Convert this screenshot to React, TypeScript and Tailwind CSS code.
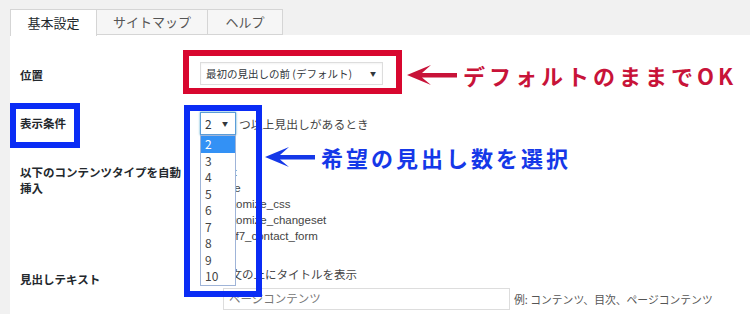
import React from "react";

const font = { fontFamily: '"Noto Sans CJK JP", "Noto Sans", sans-serif' };

function Arrow({ color }: { color: string }) {
  return (
    <svg width="50" height="22" viewBox="0 0 50 22">
      <path d="M0 11 L24 1 L15 9 L50 9 L50 13.5 L15 13.5 L24 21 Z" fill={color} />
    </svg>
  );
}

const postTypes = ["post", "page", "customize_css", "customize_changeset", "wpcf7_contact_form"];
const counts = ["2", "3", "4", "5", "6", "7", "8", "9", "10"];

export default function App() {
  return (
    <div
      className="relative w-[750px] h-[314px] overflow-hidden bg-[#f1f1f1] flex flex-col text-[#444]"
      style={font}
    >
      {/* tabs */}
      <div className="flex items-end h-[35px] pl-[10px] text-[13px]">
        <div className="h-[27px] w-[87px] -mb-px bg-white border border-b-0 border-[#d5d5d5] flex items-center justify-center text-[#23282d] relative z-10">
          基本設定
        </div>
        <div className="h-[26px] w-[111px] bg-[#f6f6f6] border border-l-0 border-[#d5d5d5] flex items-center justify-center text-[#555]">
          サイトマップ
        </div>
        <div className="h-[26px] w-[75px] bg-[#f6f6f6] border border-l-0 border-[#d5d5d5] flex items-center justify-center text-[#555]">
          ヘルプ
        </div>
      </div>

      {/* panel */}
      <div className="flex-1 ml-[10px] bg-white pl-[10px] text-[11.5px]">
        {/* 位置 */}
        <div className="flex items-center pt-[27px]">
          <div className="w-[180px] pt-[4px] font-bold text-[#23282d]">位置</div>
          <div className="w-[183px] h-[23px] border border-[#ddd] flex items-center justify-between pl-[5px] pr-[6px] text-[10.5px] text-[#32373c] shadow-[inset_0_1px_2px_rgba(0,0,0,0.05)]">
            <span>最初の見出しの前 (デフォルト)</span>
            <span className="text-[6px]">▼</span>
          </div>
        </div>

        {/* 表示条件 */}
        <div className="flex items-center mt-[27px]">
          <div className="w-[180px] font-bold text-[#23282d]">表示条件</div>
          <div className="relative">
            <div className="w-[36px] h-[23px] border border-[#5b9dd9] shadow-[0_0_2px_rgba(30,140,190,0.8)] flex items-center justify-between pl-[4px] pr-[7px] text-[12px] text-[#32373c]">
              <span>2</span>
              <span className="text-[6px]">▼</span>
            </div>
            <div className="absolute left-0 top-full w-[36px] bg-white border border-[#9fb4d8] z-20 text-[12px] text-[#444]">
              {counts.map((c, i) => (
                <div
                  key={c}
                  className={
                    i === 0
                      ? "h-[16.5px] leading-[16.5px] pl-[4px] bg-[#3391f5] text-white"
                      : "h-[16.5px] leading-[16.5px] pl-[4px]"
                  }
                >
                  {c}
                </div>
              ))}
            </div>
          </div>
          <span className="ml-[3px] text-[11.8px]">つ以上見出しがあるとき</span>
        </div>

        {/* 投稿タイプ */}
        <div className="flex mt-[29px]">
          <div className="w-[180px] pr-[10px] font-bold text-[#23282d] leading-[16px]">
            以下のコンテンツタイプを自動挿入
          </div>
          <div
            className="flex flex-col text-[11.5px] leading-[16px]"
            style={{ fontFamily: '"Liberation Sans", "Noto Sans CJK JP", sans-serif' }}
          >
            {postTypes.map((p) => (
              <div key={p} className="flex items-center gap-[3px] h-[16px]">
                <span className="w-[12px] h-[12px] border border-[#b4b9be] bg-white" />
                <span>{p}</span>
              </div>
            ))}
          </div>
        </div>

        {/* 見出しテキスト */}
        <div className="flex mt-[23px]">
          <div className="w-[180px] pt-[4px] font-bold text-[#23282d] leading-[16px]">見出しテキスト</div>
          <div className="flex flex-col">
            <div className="flex items-center gap-[7px] h-[16px] text-[11.5px]">
              <span className="w-[12px] h-[12px] border border-[#b4b9be] bg-white" />
              <span>本文の上にタイトルを表示</span>
            </div>
            <div className="flex items-center mt-[5px] ml-[23px]">
              <div className="w-[287px] h-[22px] border border-[#ddd] flex items-center pl-[5px] text-[11.5px] text-[#777]">
                ページコンテンツ
              </div>
              <span className="ml-[4px] text-[10.8px] text-[#555]">例: コンテンツ、目次、ページコンテンツ</span>
            </div>
          </div>
        </div>
      </div>

      {/* annotations */}
      <div className="absolute left-[183px] top-[50px] w-[219px] h-[44px] border-[6px] border-[#d8072f] z-30" />
      <div className="absolute left-[407px] top-[64px] flex items-center gap-[6px] z-30">
        <Arrow color="#c81339" />
        <span className="text-[22px] font-bold tracking-[4px] text-[#c81339] leading-[22px]">
          デフォルトのままでOK
        </span>
      </div>

      <div className="absolute left-[10px] top-[103px] w-[70px] h-[45px] border-[6px] border-[#0a2cf5] z-30" />
      <div className="absolute left-[184px] top-[105px] w-[78px] h-[192px] border-[6px] border-[#0a2cf5] z-30" />
      <div className="absolute left-[265px] top-[146px] flex items-center gap-[6px] z-30">
        <Arrow color="#1538e8" />
        <span className="text-[22px] font-bold tracking-[3px] text-[#1538e8] leading-[22px]">
          希望の見出し数を選択
        </span>
      </div>
    </div>
  );
}
